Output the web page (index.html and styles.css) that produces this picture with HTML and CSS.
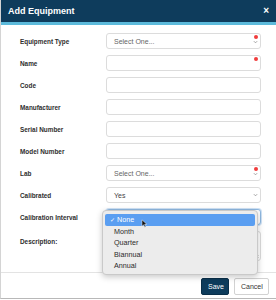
FILE: index.html
```html
<!DOCTYPE html>
<html lang="en">
<head>
    <meta charset="UTF-8">
    <meta name="viewport" content="width=device-width, initial-scale=1.0">
    <title>Add Equipment</title>
    <link rel="stylesheet" href="styles.css">
</head>
<body>
    <div class="modal">
        <div class="modal-header">
            <span class="modal-title">Add Equipment</span>
            <span class="modal-close">&times;</span>
        </div>

        <div class="modal-body">
            <div class="form-row">
                <label>Equipment Type</label>
                <div class="field">
                    <div class="control select placeholder">Select One...</div>
                    <span class="required"></span>
                    <svg class="chevron low" viewBox="0 0 6 4"><path d="M1 1l2 2 2-2"/></svg>
                </div>
            </div>
            <div class="form-row">
                <label>Name</label>
                <div class="field">
                    <div class="control"></div>
                    <span class="required"></span>
                </div>
            </div>
            <div class="form-row">
                <label>Code</label>
                <div class="field"><div class="control"></div></div>
            </div>
            <div class="form-row">
                <label>Manufacturer</label>
                <div class="field"><div class="control"></div></div>
            </div>
            <div class="form-row">
                <label>Serial Number</label>
                <div class="field"><div class="control"></div></div>
            </div>
            <div class="form-row">
                <label>Model Number</label>
                <div class="field"><div class="control"></div></div>
            </div>
            <div class="form-row">
                <label>Lab</label>
                <div class="field">
                    <div class="control select placeholder">Select One...</div>
                    <span class="required"></span>
                    <svg class="chevron low" viewBox="0 0 6 4"><path d="M1 1l2 2 2-2"/></svg>
                </div>
            </div>
            <div class="form-row">
                <label>Calibrated</label>
                <div class="field">
                    <div class="control select">Yes</div>
                    <svg class="chevron" viewBox="0 0 6 4"><path d="M1 1l2 2 2-2"/></svg>
                </div>
            </div>
            <div class="form-row">
                <label>Calibration Interval</label>
                <div class="field">
                    <div class="control select focused"></div>
                    <svg class="chevron" viewBox="0 0 6 4"><path d="M1 1l2 2 2-2"/></svg>

                    <!-- open native list -->
                    <ul class="dropdown">
                        <li class="active"><span class="check">&#10003;</span>None</li>
                        <li>Month</li>
                        <li>Quarter</li>
                        <li>Biannual</li>
                        <li>Annual</li>
                    </ul>
                    <svg class="cursor" viewBox="0 0 7 11"><path d="M1 1v8l2-2 1.5 3 1.2-.6L4.3 6.5H7z"/></svg>
                </div>
            </div>
            <div class="form-row tall">
                <label>Description:</label>
                <div class="field">
                    <div class="control textarea"></div>
                    <svg class="grip" viewBox="0 0 5 5"><path d="M1 4.5l3.5-3.5M3 4.5l1.5-1.5"/></svg>
                </div>
            </div>
        </div>

        <div class="modal-footer">
            <button class="btn btn-primary">Save</button>
            <button class="btn btn-default">Cancel</button>
        </div>
    </div>
</body>
</html>
```

FILE: styles.css
```css
body {
    margin: 0;
    font-family: "Liberation Sans", Arial, sans-serif;
    background-color: #fff;
}

.modal {
    width: 276px;
    height: 299px;
    box-sizing: border-box;
    border-left: 1px solid #d4d4d4;
    border-bottom: 1px solid #b8b8b8;
    background-color: #fff;
}

.modal-header {
    height: 22px;
    background-color: #0e3c5c;
    border-bottom: 3px solid #5cbadb;
    display: flex;
    justify-content: space-between;
    align-items: center;
    padding: 0 7px;
    color: #fff;
}

.modal-title {
    font-size: 9px;
    font-weight: bold;
}

.modal-close {
    font-size: 10px;
    font-weight: bold;
    line-height: 1;
    margin-top: -1px;
}

.modal-body {
    padding: 8px 14px 11px 19px;
    display: flex;
    flex-direction: column;
    gap: 6px;
    border-bottom: 1px solid #e3e3e3;
}

.form-row {
    display: grid;
    grid-template-columns: 86px 155px;
    align-items: center;
    height: 16px;
}

.form-row label {
    font-size: 6.4px;
    font-weight: bold;
    color: #2e2e2e;
}

.form-row.tall {
    height: 30px;
    align-items: start;
}

.form-row.tall label {
    margin-top: 7px;
}

.field {
    position: relative;
    height: 100%;
}

.control {
    box-sizing: border-box;
    height: 100%;
    border: 1px solid #dcdcdc;
    border-radius: 3px;
    background-color: #fff;
    font-size: 7px;
    color: #444;
    display: flex;
    align-items: center;
    padding-left: 7px;
}

.control.placeholder {
    color: #666;
}

.control.focused {
    border-color: #8fb8e0;
    box-shadow: 0 0 0 1px #cfe2f5;
}

.required {
    position: absolute;
    top: 2px;
    right: 3px;
    width: 4px;
    height: 4px;
    border-radius: 50%;
    background-color: #f03c3c;
}

.chevron {
    position: absolute;
    right: 3px;
    top: 6px;
    width: 5px;
    height: 4px;
    fill: none;
    stroke: #888;
    stroke-width: 0.9;
}

.chevron.low {
    top: 7px;
}

.grip {
    position: absolute;
    right: 2px;
    bottom: 2px;
    width: 5px;
    height: 5px;
    stroke: #999;
    stroke-width: 0.7;
}

.dropdown {
    position: absolute;
    top: 1px;
    left: -4px;
    width: 156px;
    box-sizing: border-box;
    margin: 0;
    padding: 3px 2px 2px;
    list-style: none;
    background-color: #ececec;
    border: 1px solid #c9c9c9;
    border-radius: 4px;
    box-shadow: 0 2px 6px rgba(0, 0, 0, 0.22);
    z-index: 10;
}

.dropdown li {
    height: 11.5px;
    line-height: 11.5px;
    font-size: 7.2px;
    color: #2a2a2a;
    padding-left: 9px;
    border-radius: 2px;
    position: relative;
}

.dropdown li.active {
    background-color: #5a9ef1;
    color: #fff;
    padding-left: 5px;
}

.dropdown .check {
    font-size: 6px;
    margin-right: 2px;
}

.cursor {
    position: absolute;
    left: 35px;
    top: 10px;
    width: 6px;
    height: 9px;
    fill: #111;
    stroke: #fff;
    stroke-width: 0.6;
    z-index: 11;
}

.modal-footer {
    display: flex;
    justify-content: flex-end;
    gap: 5px;
    padding: 5px 7px 3px;
}

.btn {
    height: 17px;
    font-family: "Liberation Sans", Arial, sans-serif;
    font-size: 7px;
    border-radius: 2px;
    padding: 0 6px;
    cursor: pointer;
}

.btn-primary {
    background-color: #0e3c5c;
    border: 1px solid #0a2f49;
    color: #fff;
    width: 28px;
}

.btn-default {
    background-color: #fff;
    border: 1px solid #d2d2d2;
    color: #333;
    width: 35px;
}
```
